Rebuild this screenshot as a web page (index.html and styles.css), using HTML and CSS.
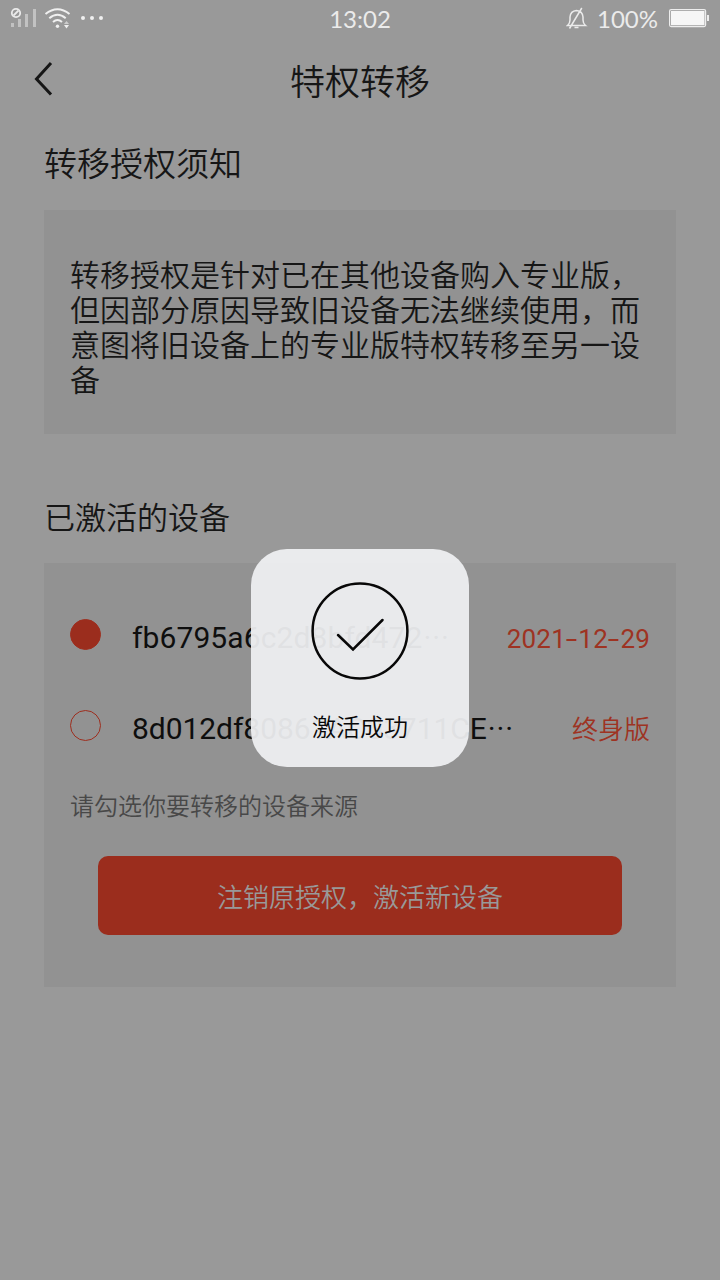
FILE: index.html
```html
<!DOCTYPE html>
<html lang="zh-CN">
<head>
<meta charset="utf-8">
<title>特权转移</title>
<link rel="stylesheet" href="styles.css">
</head>
<body>
<div class="screen">
  <header class="status">
    <div class="status-left">
      <svg width="108" height="38" viewBox="0 0 108 38">
        <g fill="#c2c2c2"><rect x="11" y="23" width="3" height="4"/><rect x="18" y="19" width="3" height="8"/><rect x="25" y="14" width="3" height="13"/><rect x="33" y="9" width="3" height="18"/></g>
        <g fill="none" stroke="#ebebeb" stroke-width="1.8"><circle cx="16" cy="13" r="4.200"/><path d="M13.500 15.500L18.500 10.500"/></g>
        <g fill="none" stroke="#f0f0f0" stroke-width="2"><path d="M45.500 14Q57.500 4.500 69.500 14"/><path d="M49.300 18.200Q57.500 11.200 65.700 18.200"/><path d="M53 22Q57.500 18 62 22"/></g>
        <g fill="#f0f0f0"><circle cx="57.500" cy="26.300" r="1.700"/><path d="M64 25h5l-2.500 3.500z"/><path d="M64 24h5l-2.500-3z" opacity=".6"/><circle cx="83" cy="18" r="2"/><circle cx="92" cy="18" r="2"/><circle cx="101" cy="18" r="2"/></g>
      </svg>
    </div>
    <time class="clock">13:02</time>
    <div class="status-right">
      <svg width="22" height="24" viewBox="0 0 22 24" fill="none" stroke="#ebebeb" stroke-width="1.500"><path d="M1.500 18.500H19.500Q17 16.500 17 13V10Q16.500 4 10.500 3.500Q4.500 4 4 10V13Q4 16.500 1.500 18.500ZM8.500 20.500H12.500M15.800 1L3.500 21.500"/></svg>
      <span class="percent">100%</span>
      <svg width="41" height="20" viewBox="0 0 41 20"><rect x=".6" y=".6" width="36" height="17" rx="1.500" fill="none" stroke="#ededed" stroke-width="1.200"/><rect x="2" y="2" width="33.500" height="14.300" fill="#f6f6f6"/><rect x="38" y="6" width="2" height="6" fill="#ededed"/></svg>
    </div>
  </header>
  <nav class="nav">
    <svg class="back" width="20" height="36" viewBox="0 0 20 36"><path d="M18 2L3.500 18L18 33.500" fill="none" stroke="#161616" stroke-width="3"/></svg>
    <h1 class="title">特权转移</h1>
  </nav>
  <main class="content">
    <h2 class="heading heading-notice">转移授权须知</h2>
    <section class="card notice">转移授权是针对已在其他设备购入专业版，<br>但因部分原因导致旧设备无法继续使用，而<br>意图将旧设备上的专业版特权转移至另一设<br>备</section>
    <h2 class="heading heading-devices">已激活的设备</h2>
    <section class="card devices">
      <div class="device">
        <span class="radio checked"></span>
        <span class="device-id first">fb6795a6c2d8bfd472<span class="dots">···</span></span>
        <span class="expiry date">2021<span class="dash">-</span>12<span class="dash">-</span>29</span>
      </div>
      <div class="device">
        <span class="radio"></span>
        <span class="device-id second">8d012df80861AC03711CE<span class="dots">···</span></span>
        <span class="expiry">终身版</span>
      </div>
      <p class="hint">请勾选你要转移的设备来源</p>
      <button class="submit">注销原授权，激活新设备</button>
    </section>
  </main>
  <div class="toast">
    <svg width="98" height="98" viewBox="0 0 98 98" fill="none" stroke="#080808" stroke-width="2.500"><circle cx="49" cy="49" r="47.400"/><path d="M27 53L42 67.500L71.500 38" stroke-linecap="round"/></svg>
    <span class="toast-text">激活成功</span>
  </div>
</div>
</body>
</html>
```
FILE: styles.css
```css
* { box-sizing: border-box; }
body { margin: 0; background: #999; font-family: "Noto Sans CJK SC", sans-serif; font-weight: 350; color: #161616; }
h1, h2, p { margin: 0; font-weight: 350; }
svg { display: block; }
.screen { position: relative; width: 720px; height: 1280px; overflow: hidden; }
.status { display: grid; grid-template-columns: 1fr auto 1fr; height: 38px; color: #ebebeb; font: 24px/38px Lato, sans-serif; }
.status-right { display: flex; align-items: center; justify-content: flex-end; height: 38px; padding-right: 10px; }
.percent { margin: 0 11px 0 9px; line-height: 36px; }
.nav { display: flex; align-items: center; justify-content: center; position: relative; height: 84px; }
.back { position: absolute; left: 33px; top: 23px; }
.title { font-size: 35px; line-height: 50px; }
.content { padding: 0 44px; }
.heading { font-size: 33px; line-height: 48px; white-space: nowrap; }
.heading-notice { padding-top: 16px; height: 88px; }
.heading-devices { padding-top: 58px; height: 129px; font-size: 31px; }
.card { background: #929292; }
.notice { height: 224px; padding: 46px 26px; font-size: 30px; line-height: 35px; white-space: nowrap; }
.devices { height: 424px; padding: 26px; }
.device { display: flex; align-items: center; height: 91px; }
.radio { flex: none; width: 31px; height: 31px; border: 1px solid #9e2e1e; border-radius: 50%; margin-right: 31px; }
.checked { background: #9b2d1d; }
.device-id { padding-top: 6px; font: 30px/40px Roboto, sans-serif; color: #0e0e0e; white-space: nowrap; }
.first { letter-spacing: .1px; }
.second { letter-spacing: -.05px; }
.dots { margin-left: 1px; letter-spacing: .9px; }
.expiry { margin-left: auto; padding-top: 4px; color: #9e3322; font-size: 26px; }
.date { padding-top: 8px; font: 26px/36px Roboto, sans-serif; letter-spacing: .2px; }
.dash { display: inline-block; margin: 0 2.500px; transform: scaleX(1.6); }
.hint { padding-top: 16px; font-size: 24px; line-height: 36px; color: #484848; }
.submit { display: block; width: 524px; height: 79px; margin: 33px auto 0; padding: 0; border: 0; border-radius: 10px; background: #9b2d1d; color: #999; font: 350 26px "Noto Sans CJK SC", sans-serif; }
.toast { position: absolute; left: 251px; top: 549px; width: 218px; height: 218px; padding-top: 33px; border-radius: 36px; background: rgba(240, 241, 243, .93); display: flex; flex-direction: column; align-items: center; }
.toast-text { margin-top: 28px; font-size: 24px; line-height: 36px; color: #080808; }
```
